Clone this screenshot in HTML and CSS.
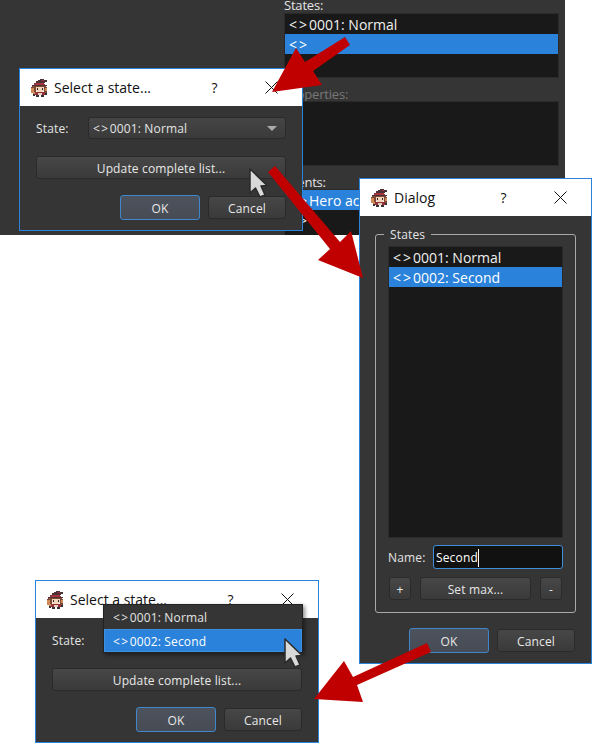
FILE: index.html
```html
<!DOCTYPE html>
<html lang="en">
<head>
<meta charset="utf-8">
<title>States</title>
<link rel="stylesheet" href="styles.css">
</head>
<body>
<svg class="defs" width="0" height="0">
  <symbol id="sprite" viewBox="0 0 18 18" shape-rendering="crispEdges">
    <path fill="#4a3236" d="M10 0h4v1h3v2h-2v1h-1v2h3v1h-15v-1h2v-2h2v-2h2v-1h2z"/>
    <path fill="#a8333c" d="M5 4h9v1h1v1h-11v-1h1zM12 1h2v1h-2z"/>
    <path fill="#7d4a38" d="M2 7h14v1h1v6h-3v-6h-8v6h-4v-1h-1v-5h1z"/>
    <path fill="#d08a55" d="M1 9h3v4h2v2h-3v-1h-2zM15 9h2v3h-2z"/>
    <path fill="#f3d5bc" d="M6 8h8v4h-1v1h-6v-1h-1z"/>
    <path fill="#33252a" d="M7 9h1v2h-1zM12 9h1v2h-1z"/>
    <path fill="#96323a" d="M5 13h10v3h-10z"/>
    <path fill="#3a3034" d="M3 15h2v2h-2zM15 14h2v2h-2zM6 16h3v2h-3zM11 16h3v2h-3z"/>
    <path fill="#e6cdb8" d="M8 14h4v2h-4z"/>
  </symbol>
  <symbol id="close" viewBox="0 0 13 13">
    <path d="M.5.5l12 12M12.5.5l-12 12" stroke="#111" fill="none"/>
  </symbol>
</svg>

<main class="canvas">
  <section class="panel">
    <div class="field-label">States:</div>
    <div class="list states-list">
      <div class="row"><span class="tag">&lt;&gt;</span>0001: Normal</div>
      <div class="row selected"><span class="tag">&lt;&gt;</span></div>
    </div>
    <div class="field-label disabled">Properties:</div>
    <div class="list props-list"></div>
    <div class="field-label">Events:</div>
    <div class="list events-list">
      <div class="row selected"><span class="tag">&lt;&gt;</span>Hero action</div>
      <div class="row"><span class="tag">&lt;&gt;</span></div>
    </div>
  </section>

  <section class="window select-window first">
    <header class="titlebar">
      <svg class="app-icon"><use href="#sprite"/></svg>
      <span class="title">Select a state...</span>
      <span class="title-btn">?</span>
      <span class="title-btn"><svg class="close-icon"><use href="#close"/></svg></span>
    </header>
    <div class="select-body">
      <div class="state-row">
        <span class="state-label">State:</span>
        <div class="combo"><span><span class="tag">&lt;&gt;</span>0001: Normal</span><i class="combo-arrow"></i></div>
      </div>
      <button class="btn wide">Update complete list...</button>
      <div class="actions">
        <button class="btn default">OK</button>
        <button class="btn cancel">Cancel</button>
      </div>
    </div>
  </section>

  <section class="window dialog-window">
    <header class="titlebar">
      <svg class="app-icon"><use href="#sprite"/></svg>
      <span class="title">Dialog</span>
      <span class="title-btn">?</span>
      <span class="title-btn"><svg class="close-icon"><use href="#close"/></svg></span>
    </header>
    <div class="dialog-body">
      <div class="group">
        <span class="group-title">States</span>
        <div class="list dialog-list">
          <div class="row"><span class="tag">&lt;&gt;</span>0001: Normal</div>
          <div class="row selected"><span class="tag">&lt;&gt;</span>0002: Second</div>
        </div>
        <div class="name-row">
          <span>Name:</span>
          <div class="name-input"><span class="caret">Second</span></div>
        </div>
        <div class="tool-row">
          <button class="btn small">+</button>
          <button class="btn grow">Set max...</button>
          <button class="btn small">-</button>
        </div>
      </div>
      <div class="actions inset">
        <button class="btn default">OK</button>
        <button class="btn cancel">Cancel</button>
      </div>
    </div>
  </section>

  <section class="window select-window last">
    <header class="titlebar">
      <svg class="app-icon"><use href="#sprite"/></svg>
      <span class="title">Select a state...</span>
      <span class="title-btn">?</span>
      <span class="title-btn"><svg class="close-icon"><use href="#close"/></svg></span>
    </header>
    <div class="select-body">
      <div class="state-row">
        <span class="state-label">State:</span>
        <div class="combo"></div>
      </div>
      <button class="btn wide">Update complete list...</button>
      <div class="actions">
        <button class="btn default">OK</button>
        <button class="btn cancel">Cancel</button>
      </div>
    </div>
    <div class="popup">
      <div class="popup-row"><span class="tag">&lt;&gt;</span>0001: Normal</div>
      <div class="popup-row current"><span class="tag">&lt;&gt;</span>0002: Second</div>
    </div>
  </section>

  <svg class="overlay" viewBox="0 0 606 756">
    <g fill="#c00000">
      <polygon points="345,37 350,45 313,71 322,85 272,92 296,48 305,62"/>
      <polygon points="268,172 275,166 340,242 351,231 363,278 318,260 330,249"/>
      <polygon points="427,643 431,652 357,685 363,702 314,699 344,661 353,677"/>
    </g>
    <g fill="#d9d9d9" stroke="#2b2b2b" stroke-width="1.5" stroke-linejoin="round">
      <polygon points="250,169 250,193 255.500,188 260,197 265,195 261,186 267,185.500"/>
      <polygon points="285,639 285,663 290.500,658 295,667 300,665 296,656 302,655.500"/>
    </g>
  </svg>
</main>
</body>
</html>
```
FILE: styles.css
```css
* { box-sizing: border-box; }

html, body { margin: 0; background: #fff; }

body {
  font-family: "Open Sans", "Noto Sans", sans-serif;
  font-size: 12px;
  letter-spacing: 0.15px;
  color: #e4e4e4;
}

.defs { position: absolute; }

.tag { letter-spacing: 1.5px; }

.row .tag { letter-spacing: 2px; }

.canvas {
  position: relative;
  width: 606px;
  height: 756px;
  overflow: hidden;
  background: #fff;
}

/* editor panel in the background */
.panel {
  position: absolute;
  left: 0;
  top: 0;
  width: 565px;
  height: 235px;
  padding-left: 284px;
  padding-right: 6px;
  background: #353535;
  overflow: hidden;
  display: flex;
  flex-direction: column;
}

.field-label {
  height: 23px;
  line-height: 14px;
  font-size: 13px;
  letter-spacing: -0.2px;
  color: #e4e4e4;
  flex: none;
  display: flex;
  align-items: flex-end;
}

.panel > .field-label:first-child { height: 13px; line-height: 11px; align-items: flex-start; }

.field-label.disabled { color: #777; }

.list {
  background: #191919;
  border: 1px solid #2a2a2a;
  flex: none;
  font-size: 14px;
}

.states-list { height: 65px; }
.props-list { height: 65px; }
.events-list { height: 60px; }

.row {
  height: 20px;
  line-height: 21px;
  padding-left: 4px;
  letter-spacing: 0;
  color: #efefef;
  white-space: nowrap;
}

.row.selected { background: #2a82da; color: #fff; }

/* windows */
.window {
  position: absolute;
  background: #353535;
  border: 1px solid #2a82da;
  display: flex;
  flex-direction: column;
}

.select-window { width: 284px; height: 163px; }
.select-window.first { left: 19px; top: 68px; }
.select-window.last { left: 35px; top: 580px; }

.dialog-window { left: 359px; top: 178px; width: 233px; height: 486px; }

.titlebar {
  flex: none;
  height: 37px;
  background: #fff;
  color: #111;
  display: flex;
  align-items: center;
  padding: 0 2px 0 10px;
  font-size: 14px;
  letter-spacing: 0;
}

.app-icon { width: 18px; height: 18px; flex: none; margin-right: 6px; }

.title { flex: 1; white-space: nowrap; }

.title-btn {
  width: 57px;
  flex: none;
  text-align: center;
  display: flex;
  justify-content: center;
  align-items: center;
}

.close-icon { width: 13px; height: 13px; }

.select-body {
  flex: 1;
  padding: 11px 16px 10px;
  display: flex;
  flex-direction: column;
}

.state-row { display: flex; align-items: center; height: 22px; }
.state-label { width: 52px; flex: none; }

.combo {
  flex: 1;
  height: 22px;
  padding: 0 8px 0 4px;
  display: flex;
  align-items: center;
  justify-content: space-between;
  background: linear-gradient(#454545, #3a3a3a);
  border: 1px solid #2a2a2a;
  border-radius: 3px;
}

.combo-arrow {
  width: 0;
  height: 0;
  border-left: 5.5px solid transparent;
  border-right: 5.5px solid transparent;
  border-top: 5px solid #ababab;
}

.btn {
  font: inherit;
  letter-spacing: inherit;
  color: #e8e8e8;
  height: 23px;
  padding: 2px 0 0;
  background: linear-gradient(#474747, #3a3a3a);
  border: 1px solid #2a2a2a;
  border-radius: 3px;
}

.wide { margin-top: 17px; flex: none; }

.actions {
  margin-top: 16px;
  display: flex;
  justify-content: flex-end;
  align-items: center;
  gap: 8px;
}

.actions.inset { margin-top: 15px; padding-right: 1px; }

.btn.default {
  width: 80px;
  height: 25px;
  background: linear-gradient(#4d535d, #464b54);
  border-color: #3f86cc;
}

.btn.cancel { width: 78px; }

.dialog-body { flex: 1; padding: 18px 15px 10px; }

.group {
  position: relative;
  height: 379px;
  border: 1px solid #a9a9a9;
  border-radius: 3px;
  padding: 11px 12px 12px;
  display: flex;
  flex-direction: column;
}

.group-title {
  position: absolute;
  left: 8px;
  top: -8px;
  padding: 0 6px;
  line-height: 15px;
  background: #353535;
}

.dialog-list { height: 292px; }

.name-row {
  margin-top: 7px;
  height: 24px;
  padding-top: 1px;
  display: flex;
  align-items: center;
  justify-content: space-between;
  flex: none;
}

.name-input {
  width: 130px;
  height: 24px;
  margin-top: -1px;
  padding: 1px 0 0 2px;
  display: flex;
  align-items: center;
  background: #111;
  border: 1px solid #3f8fdc;
  border-radius: 3px;
  color: #fff;
}

.caret { border-right: 1px solid #fff; line-height: 18px; }

.tool-row {
  margin-top: 8px;
  padding: 0 1px;
  display: flex;
  gap: 9px;
  flex: none;
}

.btn.small { width: 22px; flex: none; }
.btn.grow { flex: 1; }

.popup {
  position: absolute;
  left: 67px;
  top: 23px;
  width: 200px;
  height: 49px;
  padding-top: 1px;
  background: #353535;
  border: 1px solid #222;
  box-shadow: 2px 2px 4px rgba(0, 0, 0, 0.45);
}

.popup-row {
  height: 23px;
  line-height: 24px;
  padding-left: 9px;
  white-space: nowrap;
}

.popup-row.current {
  background: #2a82da;
  border: 1px solid #3f8fdf;
  padding-left: 8px;
  line-height: 23px;
  color: #fff;
}

.overlay {
  position: absolute;
  left: 0;
  top: 0;
  width: 606px;
  height: 756px;
  pointer-events: none;
}
```
